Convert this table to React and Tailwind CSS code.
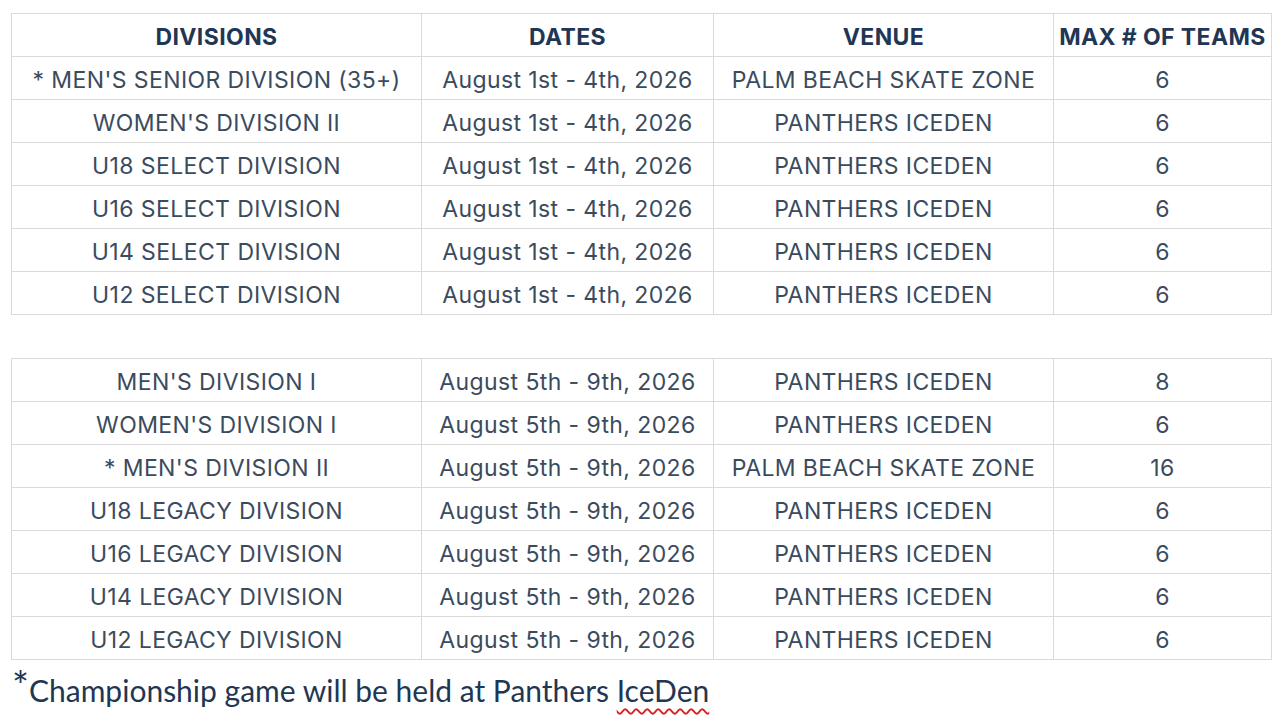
const select = [
  ['* MEN\'S SENIOR DIVISION (35+)', 'August 1st - 4th, 2026', 'PALM BEACH SKATE ZONE', '6'],
  ['WOMEN\'S DIVISION II', 'August 1st - 4th, 2026', 'PANTHERS ICEDEN', '6'],
  ['U18 SELECT DIVISION', 'August 1st - 4th, 2026', 'PANTHERS ICEDEN', '6'],
  ['U16 SELECT DIVISION', 'August 1st - 4th, 2026', 'PANTHERS ICEDEN', '6'],
  ['U14 SELECT DIVISION', 'August 1st - 4th, 2026', 'PANTHERS ICEDEN', '6'],
  ['U12 SELECT DIVISION', 'August 1st - 4th, 2026', 'PANTHERS ICEDEN', '6'],
];

const legacy = [
  ['MEN\'S DIVISION I', 'August 5th - 9th, 2026', 'PANTHERS ICEDEN', '8'],
  ['WOMEN\'S DIVISION I', 'August 5th - 9th, 2026', 'PANTHERS ICEDEN', '6'],
  ['* MEN\'S DIVISION II', 'August 5th - 9th, 2026', 'PALM BEACH SKATE ZONE', '16'],
  ['U18 LEGACY DIVISION', 'August 5th - 9th, 2026', 'PANTHERS ICEDEN', '6'],
  ['U16 LEGACY DIVISION', 'August 5th - 9th, 2026', 'PANTHERS ICEDEN', '6'],
  ['U14 LEGACY DIVISION', 'August 5th - 9th, 2026', 'PANTHERS ICEDEN', '6'],
  ['U12 LEGACY DIVISION', 'August 5th - 9th, 2026', 'PANTHERS ICEDEN', '6'],
];

const Cols = () => (
  <colgroup>
    <col className="w-[410px]" />
    <col className="w-[292px]" />
    <col className="w-[340px]" />
    <col className="w-[218px]" />
  </colgroup>
);

const Row = ({ cells }) => (
  <tr className="h-[43px]">
    {cells.map((c, i) => (
      <td key={i} className="border border-[#dadada] text-center align-middle pt-[4px] leading-none whitespace-nowrap">
        {c}
      </td>
    ))}
  </tr>
);

export default function App() {
  return (
    <div className="w-[1280px] h-[725px] bg-white pl-[11px] pt-[13px] font-['Inter',sans-serif] text-[#3b4b5e] text-[23px] tracking-[0.4px]">
      <table className="table-fixed border-collapse w-[1260px]">
        <Cols />
        <thead>
          <tr className="h-[43px]">
            {['DIVISIONS', 'DATES', 'VENUE', 'MAX # OF TEAMS'].map((h) => (
              <th key={h} className="border border-[#dadada] text-center font-bold text-[#1f3754] text-[23px] tracking-[0.4px] pt-[5px] leading-none whitespace-nowrap">
                {h}
              </th>
            ))}
          </tr>
        </thead>
        <tbody>
          {select.map((r, i) => (
            <Row key={i} cells={r} />
          ))}
        </tbody>
      </table>

      <table className="table-fixed border-collapse w-[1260px] mt-[43px]">
        <Cols />
        <tbody>
          {legacy.map((r, i) => (
            <Row key={i} cells={r} />
          ))}
        </tbody>
      </table>

      <p className="mt-[7px] ml-[1px] font-['Lato',sans-serif] text-[30px] text-[#1f3754] tracking-normal leading-none">
        <span className="text-[40px] relative top-[-1px] leading-none">*</span>
        Championship game will be held at Panthers{' '}
        <span className="underline decoration-wavy decoration-[#d92020] decoration-[1.5px] underline-offset-[6px]">IceDen</span>
      </p>
    </div>
  );
}
